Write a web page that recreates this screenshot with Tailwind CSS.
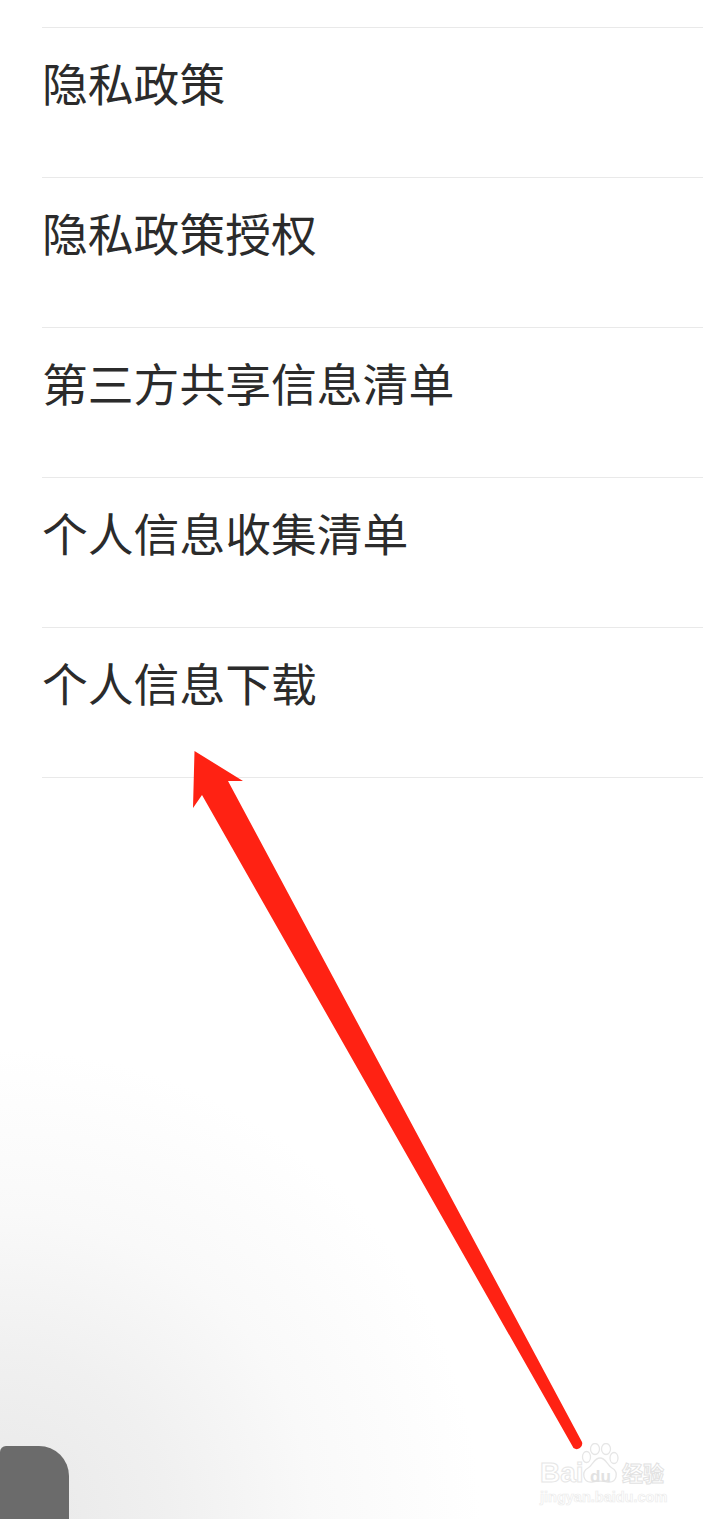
<!DOCTYPE html>
<html lang="zh">
<head>
  <meta charset="UTF-8">
  <title>隐私</title>
  <script src="https://cdn.jsdelivr.net/npm/@tailwindcss/browser@4"></script>
</head>
<body class="bg-white">
  <div class="relative h-[1519px] w-[703px] overflow-hidden bg-white font-['Noto_Sans_CJK_SC','Noto_Sans',sans-serif] text-[#2b2b2b]">

    <!-- shading, bottom left -->
    <div class="absolute inset-0 bg-[radial-gradient(ellipse_480px_470px_at_0px_1519px,#e8e8e8_0%,#f0f0f0_35%,#f9f9f9_65%,#ffffff_100%)]"></div>

    <!-- list -->
    <div class="relative pt-[27px] pl-[42px]">
      <div class="flex h-[150px] items-start border-t border-[#e9e9e9] pt-[24px] text-[45.8px] leading-[60px]">隐私政策</div>
      <div class="flex h-[150px] items-start border-t border-[#e9e9e9] pt-[24px] text-[45.8px] leading-[60px]">隐私政策授权</div>
      <div class="flex h-[150px] items-start border-t border-[#e9e9e9] pt-[24px] text-[45.8px] leading-[60px]">第三方共享信息清单</div>
      <div class="flex h-[150px] items-start border-t border-[#e9e9e9] pt-[24px] text-[45.8px] leading-[60px]">个人信息收集清单</div>
      <div class="flex h-[150px] items-start border-t border-[#e9e9e9] pt-[24px] text-[45.8px] leading-[60px]">个人信息下载</div>
      <div class="border-t border-[#e9e9e9]"></div>
    </div>

    <!-- grey tab -->
    <div class="absolute bottom-0 left-0 h-[73px] w-[69px] rounded-tr-[30px] rounded-tl-[6px] bg-[#6b6b6b]"></div>

    <!-- red arrow -->
    <svg class="absolute inset-0" width="703" height="1519" viewBox="0 0 703 1519">
      <path d="M194.5 751 L243 781 L228 781 L582 1442 A5.5 5.5 0 0 1 573.5 1448 L202 795 L193 808 Z" fill="#ff2213"/>
    </svg>

    <!-- watermark -->
    <div class="absolute left-[540px] top-[1443px] h-[62px] w-[128px]">
      <svg class="absolute left-[41px] top-0" width="38" height="41" viewBox="0 0 38 41" fill="#ffffff" stroke="#e6e6e6" stroke-width="1.3">
        <ellipse cx="5.5" cy="14" rx="4" ry="5.5"/>
        <ellipse cx="14" cy="6" rx="4.5" ry="5.5"/>
        <ellipse cx="25" cy="6" rx="4.5" ry="5.5"/>
        <ellipse cx="33" cy="15" rx="4" ry="5.5"/>
        <path d="M19 15 C13 15 12 22 7 25 C0 29 2 40 11 39 C16 38 22 38 27 39 C36 40 38 29 31 25 C26 22 25 15 19 15 Z"/>
      </svg>
      <span class="absolute left-0 top-[14px] font-['Liberation_Sans',sans-serif] text-[28px] leading-[32px] font-bold text-white [-webkit-text-stroke:1px_#e6e6e6]">Bai</span>
      <span class="absolute left-[50px] top-[24px] font-['Liberation_Sans',sans-serif] text-[17px] leading-[20px] font-bold text-[#e2e2e2]">du</span>
      <span class="absolute left-[82px] top-[15px] text-[21px] leading-[28px] font-bold text-white [-webkit-text-stroke:1px_#e2e2e2]">经验</span>
      <span class="absolute left-0 top-[45px] font-['Liberation_Sans',sans-serif] text-[14.5px] leading-[18px] font-bold text-white [-webkit-text-stroke:0.7px_#ececec]">jingyan.baidu.com</span>
    </div>
  </div>
</body>
</html>
